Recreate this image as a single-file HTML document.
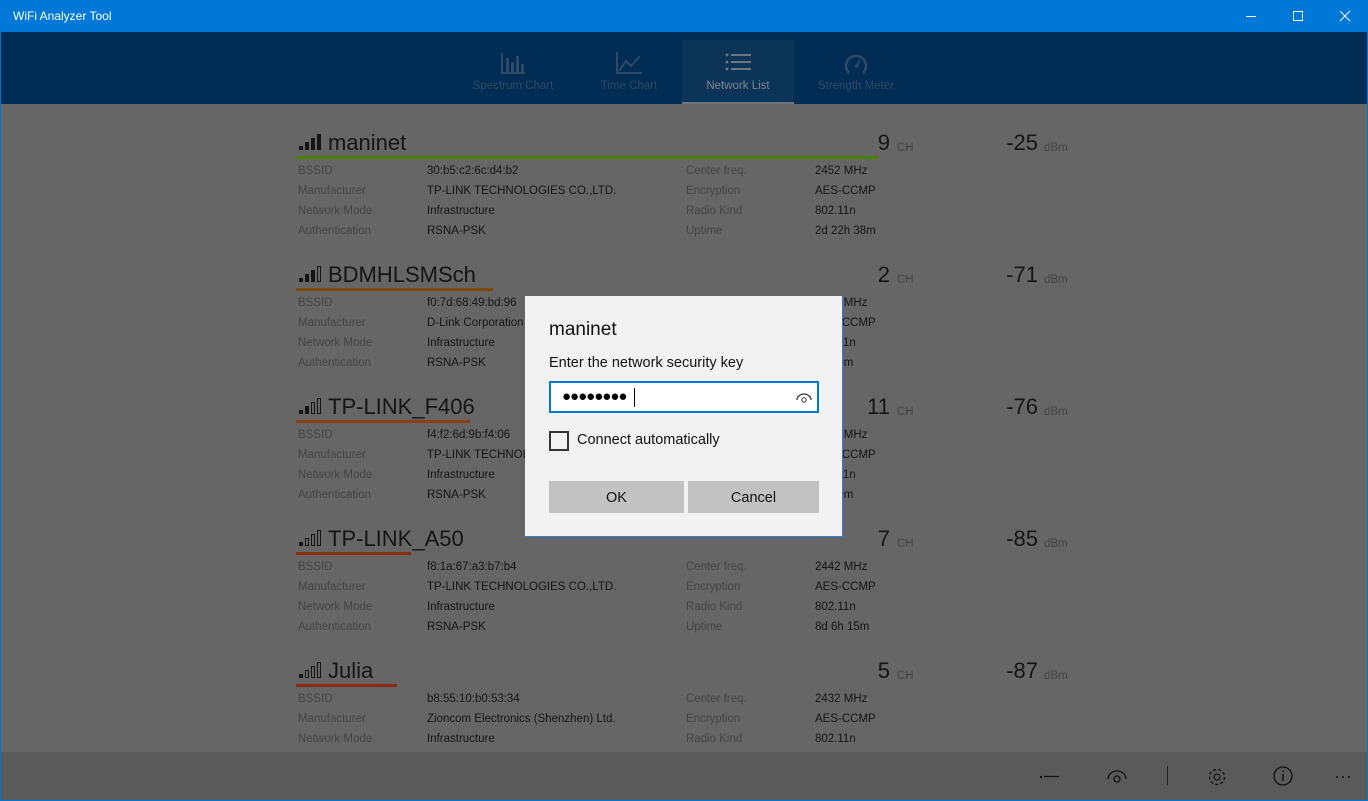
<!DOCTYPE html>
<html><head><meta charset="utf-8"><style>
*{margin:0;padding:0;box-sizing:border-box}
body{width:1368px;height:801px;overflow:hidden;background:#666;font-family:"Segoe UI","Liberation Sans",sans-serif;position:relative}
.tb{position:absolute;left:0;top:0;width:1368px;height:32px;background:#0078d7;color:#fff;font-size:12px}
.tb .t{position:absolute;left:13px;top:9px}
.hdr{position:absolute;left:0;top:32px;width:1368px;height:72px;background:#012d55}
.tab{position:absolute;top:8px;height:64px;width:112px;text-align:center;color:#2e4a66;font-size:11.5px}
.tab .lbl{position:absolute;top:40px;width:100%}
.tab.sel{background:#0b3457;color:#7a8792}
.tab.sel:after{content:"";position:absolute;left:0;bottom:0;width:100%;height:2px;background:#6e7680}
.a{position:absolute;white-space:nowrap}
.nm{font-size:22px;color:#151515}
.lb{font-size:11.5px;color:#454545}
.vl{font-size:11.5px;color:#151515}
.big{font-size:22px;color:#151515}
.un{font-size:11.5px;color:#454545}
.ul{position:absolute;height:3px}
.bot{position:absolute;left:0;top:752px;width:1368px;height:49px;background:#5a5a5a}
.dlg{position:absolute;left:525px;top:296px;width:318px;height:241px;background:#f2f2f2;border:1px solid #2b7fd0;border-top:none;border-left:none}
</style></head><body>
<div class="tb"><span class="t">WiFi Analyzer Tool</span>
<svg style="position:absolute;left:1246px;top:11px" width="110" height="12"><line x1="0" y1="5.5" x2="10" y2="5.5" stroke="#fff"/><rect x="47.5" y="0.5" width="9" height="9" fill="none" stroke="#fff"/><path d="M94 0L104 10M104 0L94 10" stroke="#fff"/></svg></div>
<div class="hdr">
<div class="tab" style="left:457px"><svg style="margin-top:12px" width="24" height="22"><path d="M1 1V21H24" stroke="#2e4a66" stroke-width="2" fill="none"/><rect x="5" y="6" width="3" height="14" fill="#2e4a66"/><rect x="10" y="10" width="3" height="10" fill="#2e4a66"/><rect x="15" y="4" width="3" height="16" fill="#2e4a66"/><rect x="20" y="12" width="3" height="8" fill="#2e4a66"/></svg><div class="lbl">Spectrum Chart</div></div>
<div class="tab" style="left:573px"><svg style="margin-top:12px" width="26" height="22"><path d="M1 0V21H26M3 19L10 9L15 14L24 4" stroke="#2e4a66" stroke-width="2" fill="none"/></svg><div class="lbl">Time Chart</div></div>
<div class="tab sel" style="left:682px"><svg style="margin-top:12px" width="26" height="20"><g fill="#6e7680"><circle cx="2" cy="3" r="1.5"/><circle cx="2" cy="10" r="1.5"/><circle cx="2" cy="17" r="1.5"/><rect x="6" y="2" width="20" height="2"/><rect x="6" y="9" width="20" height="2"/><rect x="6" y="16" width="20" height="2"/></g></svg><div class="lbl">Network List</div></div>
<div class="tab" style="left:800px"><svg style="margin-top:12px" width="26" height="24"><path d="M6 21A10 10 0 1 1 20 21" stroke="#2e4a66" stroke-width="2.5" fill="none"/><path d="M11 15L18 6L15 16Z" fill="#2e4a66"/></svg><div class="lbl">Strength Meter</div></div>
</div>

<div id="list"></div>
<script>
var N=[
["maninet","#4a8000",878,"9","-25",["30:b5:c2:6c:d4:b2","TP-LINK TECHNOLOGIES CO.,LTD.","Infrastructure","RSNA-PSK"],["2452 MHz","AES-CCMP","802.11n","2d 22h 38m"],4],
["BDMHLSMSch","#7a4a0a",493,"2","-71",["f0:7d:68:49:bd:96","D-Link Corporation","Infrastructure","RSNA-PSK"],["2417 MHz","AES-CCMP","802.11n","7h 29m"],3],
["TP-LINK_F406","#8a4010",470,"11","-76",["f4:f2:6d:9b:f4:06","TP-LINK TECHNOLOGIES CO.,LTD.","Infrastructure","RSNA-PSK"],["2462 MHz","AES-CCMP","802.11n","1h 19m"],2],
["TP-LINK_A50","#8a2e10",411,"7","-85",["f8:1a:67:a3:b7:b4","TP-LINK TECHNOLOGIES CO.,LTD.","Infrastructure","RSNA-PSK"],["2442 MHz","AES-CCMP","802.11n","8d 6h 15m"],1],
["Julia","#8a2a10",397,"5","-87",["b8:55:10:b0:53:34","Zioncom Electronics (Shenzhen) Ltd.","Infrastructure","RSNA-PSK"],["2432 MHz","AES-CCMP","802.11n","1d"],1]];
var L=["BSSID","Manufacturer","Network Mode","Authentication"],R=["Center freq.","Encryption","Radio Kind","Uptime"];
var h="";
N.forEach(function(n,i){var y=129+i*132;
var s='<svg class="a" style="left:299px;top:'+(y+5)+'px" width="26" height="16">';
for(var b=0;b<4;b++){var bh=4+b*4,x=b*6;s+= b<n[7]?'<rect x="'+x+'" y="'+(16-bh)+'" width="4" height="'+bh+'" fill="#151515"/>':'<rect x="'+(x+0.5)+'" y="'+(16.5-bh)+'" width="3" height="'+(bh-1)+'" fill="none" stroke="#151515"/>';}
s+='</svg>';h+=s;
h+='<div class="a nm" style="left:328px;top:'+(y+1)+'px">'+n[0]+'</div>';
h+='<div class="ul" style="left:296px;top:'+(y+27)+'px;width:'+(n[2]-296)+'px;background:'+n[1]+'"></div>';
h+='<div class="a big" style="right:'+(1368-890)+'px;top:'+(y+1)+'px">'+n[3]+'</div><div class="a un" style="left:897px;top:'+(y+13)+'px">CH</div>';
h+='<div class="a big" style="right:'+(1368-1038)+'px;top:'+(y+1)+'px">'+n[4]+'</div><div class="a un" style="left:1044px;top:'+(y+13)+'px">dBm</div>';
for(var r=0;r<4;r++){var yy=y+36+r*20;if(yy>740)break;
h+='<div class="a lb" style="left:298px;top:'+yy+'px">'+L[r]+'</div><div class="a vl" style="left:427px;top:'+yy+'px">'+n[5][r]+'</div>';
h+='<div class="a lb" style="left:686px;top:'+yy+'px">'+R[r]+'</div><div class="a vl" style="left:815px;top:'+yy+'px">'+n[6][r]+'</div>';}
});
document.getElementById("list").innerHTML=h;
</script>

<div class="bot">
<svg style="position:absolute;left:1030px;top:12px" width="330" height="26">
<rect x="10" y="12" width="2" height="2" fill="#111"/><line x1="14" y1="12.5" x2="29" y2="12.5" stroke="#111" stroke-width="1.2"/>
<path d="M78 15A9 8 0 0 1 96 15" stroke="#111" stroke-width="1.3" fill="none"/><circle cx="87" cy="15" r="3" stroke="#111" stroke-width="1.3" fill="none"/>
<line x1="137.5" y1="2" x2="137.5" y2="21" stroke="#222"/>
<circle cx="187" cy="13" r="3" stroke="#111" stroke-width="1.2" fill="none"/><circle cx="187" cy="13" r="7.5" stroke="#111" stroke-width="1.4" fill="none" stroke-dasharray="3 2.2"/>
<circle cx="253" cy="12" r="9" stroke="#111" stroke-width="1.3" fill="none"/><line x1="253" y1="10" x2="253" y2="17" stroke="#111" stroke-width="1.4"/><rect x="252.3" y="6.5" width="1.5" height="1.5" fill="#111"/>
<circle cx="307" cy="13" r="1" fill="#111"/><circle cx="313" cy="13" r="1" fill="#111"/><circle cx="319" cy="13" r="1" fill="#111"/>
</svg></div>

<div class="dlg">
<div class="a" style="left:24px;top:23px;font-size:19px;color:#111">maninet</div>
<div class="a" style="left:24px;top:59px;font-size:14.5px;color:#111">Enter the network security key</div>
<div class="a" style="left:24px;top:85px;width:270px;height:32px;background:#fff;border:2px solid #0078d7">
<span class="a" style="left:11px;top:5px;font-size:15px;letter-spacing:-1px;color:#000">●●●●●●●●</span>
<span class="a" style="left:83px;top:5px;width:1px;height:19px;background:#000"></span>
<svg class="a" style="left:244px;top:8px" width="18" height="12"><path d="M2 9A7 6 0 0 1 16 9" stroke="#333" stroke-width="1.2" fill="none"/><circle cx="9" cy="9" r="2.2" stroke="#333" fill="none"/></svg></div>
<div class="a" style="left:24px;top:135px;width:20px;height:20px;border:2px solid #333"></div>
<div class="a" style="left:52px;top:136px;font-size:14.5px;color:#111">Connect automatically</div>
<div class="a" style="left:24px;top:185px;width:135px;height:32px;background:#c2c2c2;text-align:center;line-height:34px;font-size:14.5px;color:#111">OK</div>
<div class="a" style="left:163px;top:185px;width:131px;height:32px;background:#c2c2c2;text-align:center;line-height:34px;font-size:14.5px;color:#111">Cancel</div>
</div>
<div style="position:absolute;left:0;top:32px;width:1px;height:769px;background:#0078d7"></div>
<div style="position:absolute;right:0;top:32px;width:1px;height:769px;background:#0078d7"></div>
<div style="position:absolute;left:0;bottom:0;width:1368px;height:1px;background:#0078d7"></div>
</body></html>
